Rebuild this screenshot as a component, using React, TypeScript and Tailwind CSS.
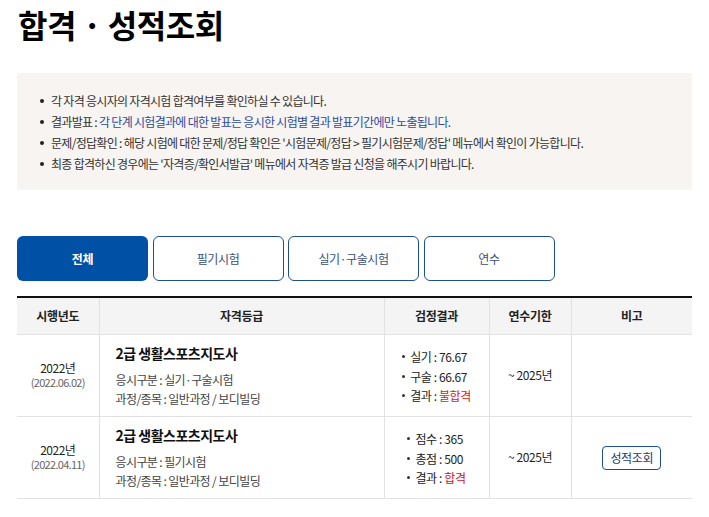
import React from 'react';

const font = { fontFamily: '"Noto Sans CJK KR", "Noto Sans", sans-serif' };

const notices: React.ReactNode[] = [
  '각 자격 응시자의 자격시험 합격여부를 확인하실 수 있습니다.',
  <>
    결과발표 : <span className="text-[#2d4c9c]">각 단계 시험결과에 대한 발표는 응시한 시험별 결과 발표기간에만 노출됩니다.</span>
  </>,
  "문제/정답확인 : 해당 시험에 대한 문제/정답 확인은 '시험문제/정답 > 필기시험문제/정답' 메뉴에서 확인이 가능합니다.",
  "최종 합격하신 경우에는 '자격증/확인서발급' 메뉴에서 자격증 발급 신청을 해주시기 바랍니다.",
];

const tabs = ['전체', '필기시험', '실기·구술시험', '연수'];

interface Row {
  year: string;
  date: string;
  title: string;
  kind: string;
  course: string;
  results: { label: string; value: string; fail?: boolean; pass?: boolean }[];
  until: string;
  button?: boolean;
}

const rows: Row[] = [
  {
    year: '2022년',
    date: '(2022.06.02)',
    title: '2급 생활스포츠지도사',
    kind: '응시구분 : 실기·구술시험',
    course: '과정/종목 : 일반과정 / 보디빌딩',
    results: [
      { label: '실기', value: '76.67' },
      { label: '구술', value: '66.67' },
      { label: '결과', value: '불합격', fail: true },
    ],
    until: '~ 2025년',
  },
  {
    year: '2022년',
    date: '(2022.04.11)',
    title: '2급 생활스포츠지도사',
    kind: '응시구분 : 필기시험',
    course: '과정/종목 : 일반과정 / 보디빌딩',
    results: [
      { label: '점수', value: '365' },
      { label: '총점', value: '500' },
      { label: '결과', value: '합격', pass: true },
    ],
    until: '~ 2025년',
    button: true,
  },
];

export default function App() {
  return (
    <div className="w-[709px] h-[517px] overflow-hidden bg-white text-[#222]" style={font}>
      <h1 className="pl-[18px] pt-[4px] text-[32px] leading-[40px] font-bold text-black tracking-[-0.5px]">
        합격 · 성적조회
      </h1>

      <div className="mx-[17px] mt-[29px] w-[675px] bg-[#f7f4f1] pl-[23px] pt-[17px] pb-[16px]">
        <ul className="flex flex-col">
          {notices.map((n, i) => (
            <li key={i} className="flex items-center text-[12px] leading-[21px] text-[#333] tracking-[-0.7px]">
              <span className="w-[4px] h-[4px] rounded-full bg-[#222] mr-[7px] shrink-0" />
              <span>{n}</span>
            </li>
          ))}
        </ul>
      </div>

      <div className="mx-[17px] mt-[46px] flex gap-[4.5px]">
        {tabs.map((t, i) => (
          <div
            key={t}
            className={
              i === 0
                ? 'w-[131px] h-[45px] rounded-[6px] bg-[#0050a6] text-white font-bold text-[12px] tracking-[-0.4px] flex items-center justify-center'
                : 'w-[131px] h-[45px] rounded-[6px] border border-[#1e4f8f] text-[#3a4f7c] text-[12px] tracking-[-0.4px] flex items-center justify-center'
            }
          >
            {t}
          </div>
        ))}
      </div>

      <table className="mx-[17px] mt-[15px] w-[675px] border-collapse border-t-2 border-t-[#111] table-fixed">
        <colgroup>
          <col className="w-[82px]" />
          <col className="w-[285px]" />
          <col className="w-[105px]" />
          <col className="w-[82px]" />
          <col className="w-[121px]" />
        </colgroup>
        <thead>
          <tr className="h-[37px] bg-[#f4f4f4] text-[12px] text-[#222] tracking-[-0.3px]">
            <th className="font-semibold border-b border-[#e2e2e2]">시행년도</th>
            <th className="font-semibold border-b border-l border-[#e2e2e2]">자격등급</th>
            <th className="font-semibold border-b border-l border-[#e2e2e2]">검정결과</th>
            <th className="font-semibold border-b border-l border-[#e2e2e2]">연수기한</th>
            <th className="font-semibold border-b border-l border-[#e2e2e2]">비고</th>
          </tr>
        </thead>
        <tbody>
          {rows.map((r, i) => (
            <tr key={i} className="h-[82px] border-b border-[#e2e2e2]">
              <td className="text-center align-middle">
                <div className="flex flex-col items-center">
                  <span className="text-[12px] leading-[14px] text-[#222] tracking-[-0.5px]">{r.year}</span>
                  <span className="text-[11px] leading-[14px] text-[#666] tracking-[-0.7px]">{r.date}</span>
                </div>
              </td>
              <td className="border-l border-[#e2e2e2] pl-[16px] align-middle">
                <div className="text-[14px] leading-[20px] font-semibold text-[#111] tracking-[-0.5px]">{r.title}</div>
                <div className="mt-[7px] text-[12px] leading-[19px] text-[#444] tracking-[-0.6px]">{r.kind}</div>
                <div className="text-[12px] leading-[19px] text-[#444] tracking-[-0.6px]">{r.course}</div>
              </td>
              <td className="border-l border-[#e2e2e2] text-center align-middle pb-[5px]">
                <ul className="inline-flex flex-col text-left">
                  {r.results.map((x) => (
                    <li key={x.label} className="flex items-center text-[12px] leading-[19.5px] text-[#222] tracking-[-0.4px]">
                      <span className="w-[3px] h-[3px] rounded-full bg-[#333] mr-[5px]" />
                      <span>
                        {x.label} :{' '}
                        <span className={x.fail ? 'text-[#e0201c]' : x.pass ? 'text-[#d0102c]' : ''}>{x.value}</span>
                      </span>
                    </li>
                  ))}
                </ul>
              </td>
              <td className="border-l border-[#e2e2e2] text-center align-middle text-[12px] text-[#222] tracking-[-0.4px]">{r.until}</td>
              <td className="border-l border-[#e2e2e2] text-center align-middle">
                {r.button && (
                  <span className="inline-flex items-center justify-center w-[59px] h-[24px] rounded-[4px] border border-[#1e4f8f] text-[12px] text-[#1f3a6b] tracking-[-0.4px]">
                    성적조회
                  </span>
                )}
              </td>
            </tr>
          ))}
        </tbody>
      </table>
    </div>
  );
}
